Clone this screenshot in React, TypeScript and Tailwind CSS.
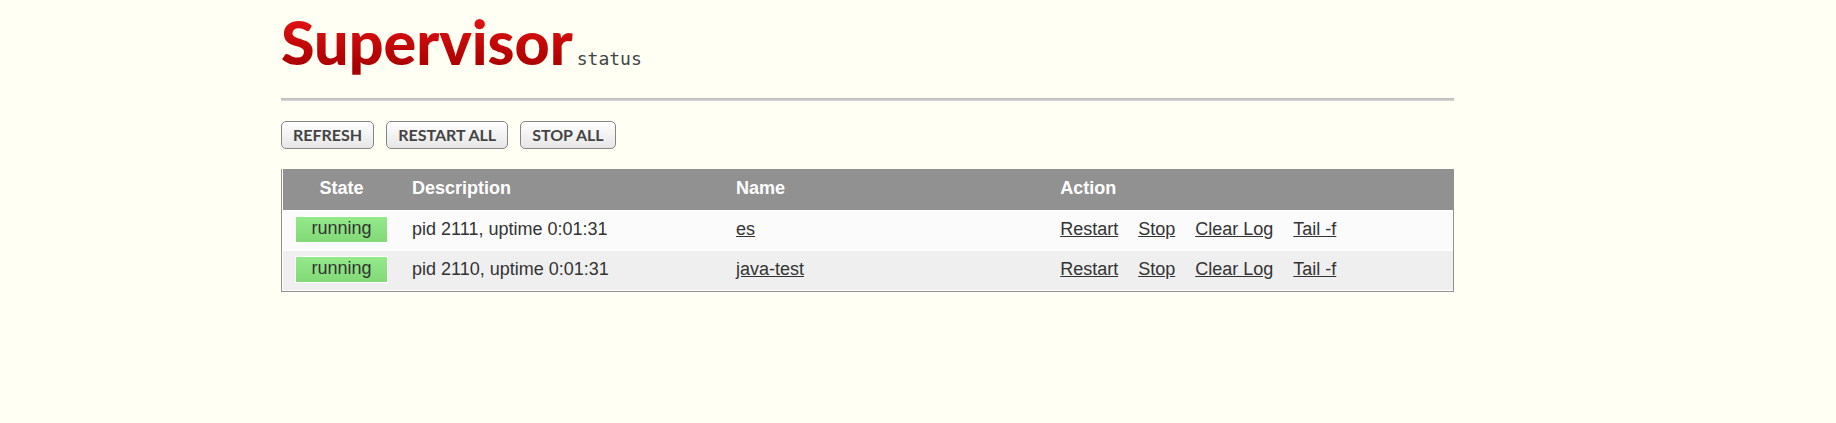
interface Process {
  id: number;
  name: string;
  state: string;
  description: string;
}

const processes: Process[] = [
  { id: 1, name: 'es', state: 'running', description: 'pid 2111, uptime 0:01:31' },
  { id: 2, name: 'java-test', state: 'running', description: 'pid 2110, uptime 0:01:31' },
];

const toolbar = ['REFRESH', 'RESTART ALL', 'STOP ALL'];
const actions = ['Restart', 'Stop', 'Clear Log', 'Tail -f'];

function Header() {
  return (
    <header className="flex items-baseline gap-1 h-[98px] leading-[84px]">
      <h1 className="font-['Lato',sans-serif] font-black text-[61px] bg-linear-to-b from-[#e01212] from-25% to-[#a80000] to-80% bg-clip-text text-transparent">
        Supervisor
      </h1>
      <span className="font-['DejaVu_Sans_Mono',monospace] text-[18px] text-[#444444]">status</span>
    </header>
  );
}

function ToolbarButton({ label }: { label: string }) {
  return (
    <button
      type="button"
      className="h-7 px-[11px] rounded-[5px] border border-[#858585] bg-linear-to-b from-white to-[#e6e6e6] font-['Lato',sans-serif] font-bold text-[16px] leading-6 text-[#444444] cursor-pointer"
    >
      {label}
    </button>
  );
}

function ProcessRow({ process }: { process: Process }) {
  return (
    <tr className="h-[40px] bg-[#fbfbfb] even:bg-[#efefef] border-t border-white">
      <td className="px-3 pb-px">
        <span className="block h-[27px] border border-white bg-linear-to-b from-[#94e98a] to-[#83d878] text-center leading-[22px]">
          {process.state}
        </span>
      </td>
      <td className="px-3 pb-0.5">{process.description}</td>
      <td className="px-3 pb-0.5">
        <a href="#" className="underline">{process.name}</a>
      </td>
      <td className="px-3 pb-0.5">
        <div className="flex gap-5">
          {actions.map((action) => (
            <a key={action} href="#" className="underline">{action}</a>
          ))}
        </div>
      </td>
    </tr>
  );
}

export default function App() {
  return (
    <div className="min-h-screen bg-[#fffff3] pl-[281px] pr-[382px] font-['Liberation_Sans',Arial,sans-serif] text-[18px] leading-6 text-[#333333]">
      <Header />
      <hr className="h-[3px] border-0 bg-linear-to-b from-[#b8b8b8] to-[#dadada]" />

      <div className="flex gap-3 mt-5 mb-5">
        {toolbar.map((label) => (
          <ToolbarButton key={label} label={label} />
        ))}
      </div>

      <div className="border border-[#919191] border-t-0 bg-white pl-px pb-px">
        <table className="w-full table-fixed border-collapse text-left">
          <thead>
            <tr className="h-[41px] bg-[#919191] text-white">
              <th className="w-[10%] px-3 pb-0.5 text-center">State</th>
              <th className="w-[27.7%] px-3 pb-0.5">Description</th>
              <th className="w-[27.7%] px-3 pb-0.5">Name</th>
              <th className="px-3 pb-0.5">Action</th>
            </tr>
          </thead>
          <tbody>
            {processes.map((process) => (
              <ProcessRow key={process.id} process={process} />
            ))}
          </tbody>
        </table>
      </div>
    </div>
  );
}
